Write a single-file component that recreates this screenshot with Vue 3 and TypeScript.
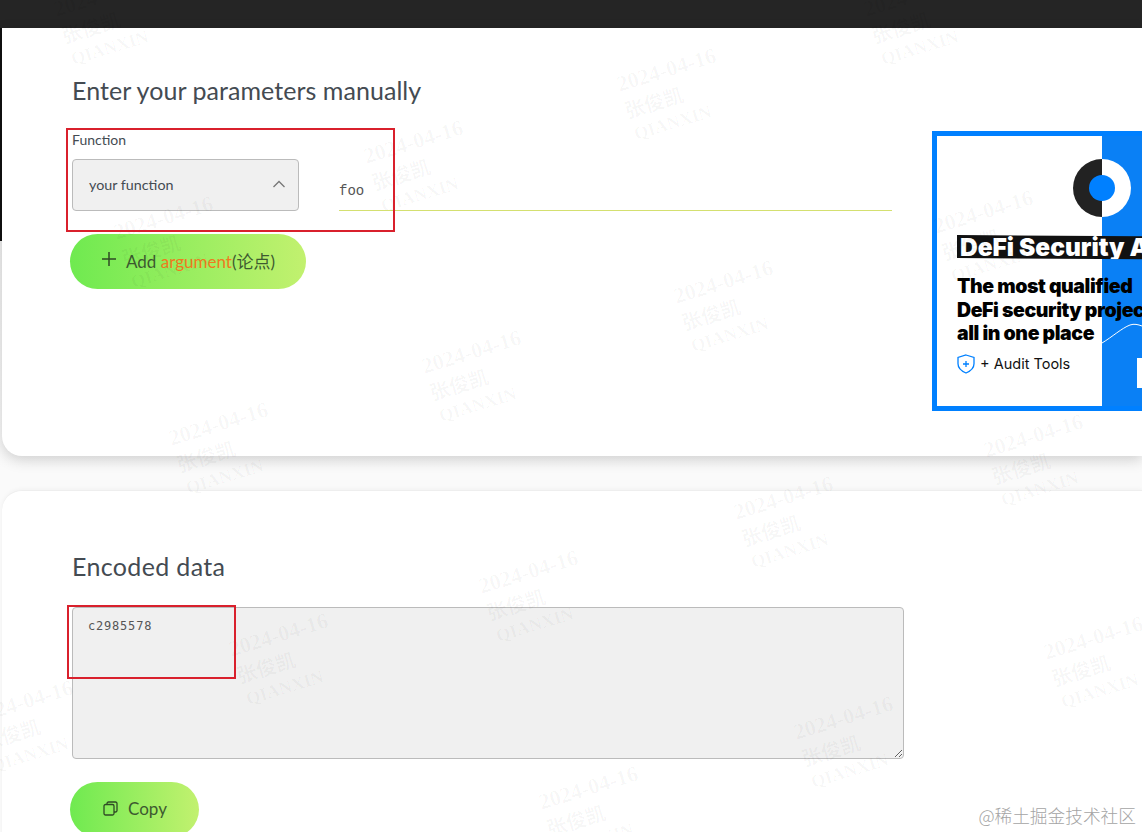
<script setup lang="ts">
interface Mark {
  x: number
  y: number
}

// centre points of the tiled watermark, read from the screenshot
const marks: Mark[] = [
  { x: 105, y: 15 },
  { x: 915, y: 15 },
  { x: 668, y: 90 },
  { x: 415, y: 162 },
  { x: 165, y: 238 },
  { x: 985, y: 232 },
  { x: 725, y: 302 },
  { x: 473, y: 372 },
  { x: 220, y: 444 },
  { x: 1035, y: 456 },
  { x: 785, y: 518 },
  { x: 530, y: 592 },
  { x: 280, y: 655 },
  { x: 25, y: 722 },
  { x: 1095, y: 658 },
  { x: 845, y: 738 },
  { x: 590, y: 808 },
]

function markStyle(m: Mark) {
  return { left: `${m.x - 46}px`, top: `${m.y - 38}px` }
}
</script>

<template>
  <div class="page">
    <div class="topbar"></div>
    <div class="shell">
      <section class="card card-first">
        <div class="form">
          <h2 class="title">Enter your parameters manually</h2>
          <div class="row">
            <div class="field">
              <label class="label">Function</label>
              <div class="select">
                <span>your function</span>
                <svg class="chevron" width="14" height="8" viewBox="0 0 14 8" fill="none">
                  <path d="M1.5 7 7 1.5 12.5 7" stroke="#777" stroke-width="1.3" />
                </svg>
              </div>
            </div>
            <input class="arg" type="text" value="foo" readonly />
          </div>
          <button class="pill pill-add" type="button">
            <svg class="plus" width="14" height="14" viewBox="0 0 14 14" fill="none">
              <path d="M7 0v14M0 7h14" stroke="#2f4a25" stroke-width="1.5" />
            </svg>
            <span>Add <em class="hl">argument</em>(论点)</span>
          </button>
        </div>

        <aside class="ad">
          <div class="ad-logo"><span class="ad-dot"></span></div>
          <div class="ad-band">DeFi Security Audits</div>
          <p class="ad-copy">The most qualified<br />DeFi security projects<br />all in one place</p>
          <div class="ad-tools">
            <svg width="18" height="20" viewBox="0 0 18 20" fill="none">
              <path d="M9 1 17 3.4v6.4c0 4.200-3.200 7.200-8 9.200-4.800-2-8-5-8-9.200V3.400L9 1Z" stroke="#0080ff" stroke-width="1.300" />
              <path d="M9 7v6M6 10h6" stroke="#0080ff" stroke-width="1.300" />
            </svg>
            <span>+ Audit Tools</span>
          </div>
          <svg class="ad-curve" width="40" height="24" viewBox="0 0 40 24" fill="none">
            <path d="M0 23C10 17 20 8 28 5c4-1.500 8-.5 12 1" stroke="#fff" stroke-width="1" />
          </svg>
          <span class="ad-box"></span>
        </aside>
      </section>

      <section class="card card-second">
        <h2 class="title title-data">Encoded data</h2>
        <textarea class="output" readonly>c2985578</textarea>
        <button class="pill pill-copy" type="button">
          <svg width="15" height="15" viewBox="0 0 15 15" fill="none">
            <rect x="1" y="3.500" width="10" height="10.500" rx="1.500" stroke="#2f4a25" stroke-width="1.300" />
            <path d="M4 3.500V2.500A1.500 1.500 0 0 1 5.500 1h7A1.500 1.500 0 0 1 14 2.500v7a1.500 1.500 0 0 1-1.500 1.500H11" stroke="#2f4a25" stroke-width="1.300" />
          </svg>
          <span>Copy</span>
        </button>
      </section>
    </div>

    <div class="watermarks">
      <div v-for="(m, i) in marks" :key="i" class="mark" :style="markStyle(m)">
        <div class="mark-date">2024-04-16</div>
        <div class="mark-name">张俊凯</div>
        <div class="mark-org">QIANXIN</div>
      </div>
    </div>

    <span class="redbox redbox-function"></span>
    <span class="redbox redbox-data"></span>
    <span class="credit">@稀土掘金技术社区</span>
  </div>
</template>

<style>
html,
body {
  margin: 0;
  background: #fff;
}
</style>

<style scoped>
.page {
  position: relative;
  width: 1142px;
  height: 832px;
  overflow: hidden;
  font-family: Lato, "Noto Sans CJK SC", sans-serif;
  color: #444b52;
}

.topbar {
  height: 28px;
  background: #252525;
}

.shell {
  padding-left: 2px;
  background: linear-gradient(#111 213px, #eee 213px, #fafafa 440px);
}

.card {
  background: #fff;
  padding-left: 70px;
}

.card-first {
  display: flex;
  gap: 40px;
  height: 428px;
  box-sizing: border-box;
  padding-top: 46px;
  border-radius: 0 0 0 20px;
  box-shadow: 0 4px 14px rgba(0, 0, 0, 0.17);
  position: relative;
}

.card-second {
  margin-top: 34px;
  height: 400px;
  box-sizing: border-box;
  padding-top: 59px;
  border-top: 1px solid #eee;
  border-radius: 20px 0 0 0;
  box-shadow: 0 -1px 4px rgba(0, 0, 0, 0.04);
}

.form {
  width: 820px;
  flex-shrink: 0;
}

.title {
  margin: 0;
  font-size: 25px;
  line-height: 32px;
  font-weight: 400;
  letter-spacing: 0.05px;
}

.title-data {
  letter-spacing: 0.35px;
}

.row {
  display: flex;
  align-items: flex-end;
  gap: 40px;
  margin-top: 25px;
}

.field {
  width: 227px;
  flex-shrink: 0;
}

.label {
  display: block;
  font-size: 14px;
  line-height: 18px;
  margin-bottom: 10px;
}

.select {
  display: flex;
  align-items: center;
  justify-content: space-between;
  height: 52px;
  box-sizing: border-box;
  padding: 0 12px 2px 16px;
  background: #f0f0f0;
  border: 1px solid #bbb;
  border-radius: 4px;
  font-size: 14.3px;
}

.arg {
  flex: 1;
  min-width: 0;
  height: 40px;
  box-sizing: border-box;
  padding: 0;
  border: 0;
  border-bottom: 1px solid #d4e070;
  outline: none;
  background: transparent;
  font-family: "Liberation Mono", monospace;
  font-size: 14px;
  color: #555;
}

.pill {
  display: flex;
  align-items: center;
  height: 55px;
  margin-left: -2px;
  border: 0;
  border-radius: 28px;
  background: linear-gradient(90deg, #6fea50 0%, #c2f16f 100%);
  font-family: inherit;
  font-size: 17px;
  color: #3d5a30;
}

.pill-add {
  width: 236px;
  margin-top: 23px;
  padding: 0 0 2px 32px;
  gap: 10px;
}

.plus {
  margin-top: -4px;
}

.hl {
  font-style: normal;
  color: #f07a1e;
}

.pill-copy {
  width: 129px;
  margin-top: 23px;
  padding: 0 0 2px 33px;
  gap: 10px;
}

.output {
  display: block;
  width: 832px;
  height: 152px;
  box-sizing: border-box;
  margin-top: 25px;
  padding: 9px 15px;
  background: #f0f0f0;
  border: 1px solid #bbb;
  border-radius: 4px;
  outline: none;
  font-family: "DejaVu Sans Mono", monospace;
  font-size: 12px;
  letter-spacing: 0.8px;
  line-height: 18px;
  color: #555;
}

.ad {
  position: relative;
  flex-shrink: 0;
  width: 280px;
  height: 280px;
  box-sizing: border-box;
  margin-top: 57px;
  padding: 23px 0 0 20px;
  border: 5px solid #0080ff;
  background: linear-gradient(90deg, #fff 165px, #0a80f5 165px);
  font-family: Inter, sans-serif;
  color: #000;
  overflow: hidden;
}

.ad-logo {
  display: flex;
  align-items: center;
  justify-content: center;
  width: 58px;
  height: 58px;
  margin-left: 116px;
  border-radius: 50%;
  background: linear-gradient(90deg, #222 50%, #fff 50%);
}

.ad-dot {
  width: 26px;
  height: 26px;
  border-radius: 50%;
  background: #0080ff;
}

.ad-band {
  margin-top: 18px;
  width: 290px;
  height: 25px;
  line-height: 25px;
  padding-left: 3px;
  background: #111;
  color: #fff;
  font-size: 24.5px;
  font-weight: 900;
  white-space: nowrap;
  clip-path: polygon(0 0, 100% 8%, 100% 100%, 0 92%);
}

.ad-copy {
  margin: 15px 0 0;
  font-size: 19.5px;
  line-height: 23.5px;
  font-weight: 900;
  letter-spacing: -0.4px;
  white-space: nowrap;
}

.ad-tools {
  display: flex;
  align-items: center;
  gap: 5px;
  margin-top: 8px;
  height: 20px;
  font-size: 14.5px;
  font-weight: 400;
  color: #111;
}

.ad-curve {
  position: absolute;
  left: 165px;
  top: 184px;
}

.ad-box {
  position: absolute;
  left: 200px;
  top: 222px;
  width: 40px;
  height: 30px;
  background: #fff;
}

.watermarks {
  position: absolute;
  inset: 0;
  pointer-events: none;
}

.mark {
  position: absolute;
  width: 110px;
  font-family: "Liberation Serif", "Noto Sans CJK SC", serif;
  font-weight: 700;
  color: rgba(0, 0, 0, 0.035);
  transform: rotate(-17deg);
  white-space: nowrap;
}

.mark-date {
  font-size: 22px;
  line-height: 32px;
}

.mark-name {
  font-size: 20px;
  line-height: 24px;
}

.mark-org {
  margin-left: 2px;
  font-size: 18px;
  line-height: 24px;
}

.redbox {
  position: absolute;
  box-sizing: border-box;
  border: 2px solid #d9202c;
  pointer-events: none;
}

.redbox-function {
  left: 66px;
  top: 128px;
  width: 329px;
  height: 104px;
}

.redbox-data {
  left: 67px;
  top: 605px;
  width: 169px;
  height: 74px;
}

.credit {
  position: absolute;
  right: 6px;
  top: 804px;
  font-family: "Noto Sans CJK SC", sans-serif;
  font-size: 17.7px;
  line-height: 22px;
  font-weight: 300;
  color: #a4a4a4;
  white-space: nowrap;
}
</style>
